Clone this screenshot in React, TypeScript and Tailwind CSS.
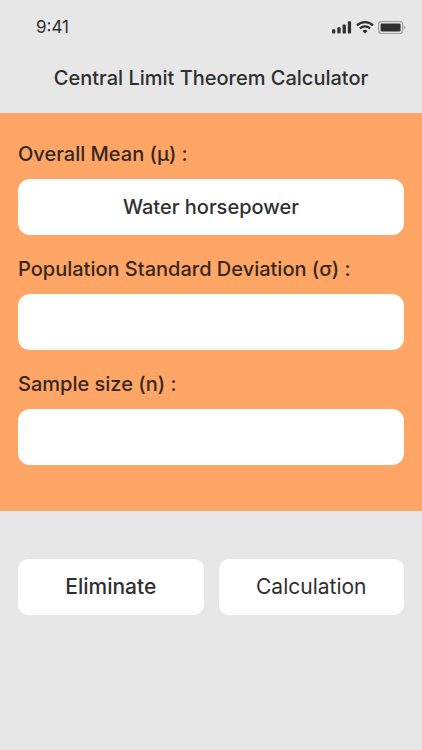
import { useState } from "react";

const fields = [
  { id: "mean", label: "Overall Mean (µ) :", value: "Water horsepower" },
  { id: "deviation", label: "Population Standard Deviation (σ) :", value: "" },
  { id: "size", label: "Sample size (n) :", value: "" },
];

function StatusBar() {
  return (
    <div className="flex items-center justify-between pt-4 pr-4 pl-9">
      <span className="text-[17px] leading-[22px]">9:41</span>
      <div className="flex items-center gap-1">
        {/* Signal */}
        <svg width="20" height="13" viewBox="0 0 20 13" fill="currentColor">
          <rect x="0" y="8.2" width="3.3" height="4.3" rx="1" />
          <rect x="5.3" y="6.2" width="3.3" height="6.3" rx="1" />
          <rect x="10.6" y="3.4" width="3.3" height="9.1" rx="1" />
          <rect x="15.8" y="0.3" width="3.3" height="12.2" rx="1" />
        </svg>
        {/* Wi-Fi */}
        <svg width="18" height="13" viewBox="0 0 18 13" fill="none" stroke="currentColor" strokeWidth="2.2">
          <path d="M1 4.4a11.5 11.5 0 0 1 16 0" />
          <path d="M3.9 7.5a7.2 7.2 0 0 1 10.2 0" />
          <path d="M9 12.4 6.5 9.9a3.8 3.8 0 0 1 5 0Z" fill="currentColor" stroke="none" />
        </svg>
        {/* Battery */}
        <svg width="28" height="13" viewBox="0 0 28 13">
          <rect x="0.6" y="0.5" width="24" height="12" rx="3" fill="none" stroke="currentColor" strokeWidth="1.1" opacity="0.4" />
          <rect x="2.6" y="2.4" width="20" height="8.2" rx="1.4" fill="currentColor" />
          <path d="M25.9 4.4v4.2a2.3 2.3 0 0 0 0-4.2Z" fill="currentColor" opacity="0.4" />
        </svg>
      </div>
    </div>
  );
}

export default function App() {
  const [values, setValues] = useState(fields.map((f) => f.value));

  const update = (i: number, next: string) => {
    setValues(values.map((v, j) => (j === i ? next : v)));
  };

  return (
    <main className="min-h-screen bg-[#e7e7e7] font-['Inter','Liberation_Sans',sans-serif] text-[#2f2f2f]">
      <header>
        <StatusBar />
        <h1 className="pt-[25px] pb-5 text-center text-[20px] leading-[30px] font-medium">
          Central Limit Theorem Calculator
        </h1>
      </header>

      <form onSubmit={(e) => e.preventDefault()}>
        <div className="flex flex-col gap-[19px] bg-[#ffa566] px-[18px] pt-[26px] pb-[46px]">
          {fields.map((field, i) => (
            <div key={field.id} className="flex flex-col gap-[10px]">
              <label htmlFor={field.id} className="text-[20px] leading-[30px] font-medium text-[#35281f]">
                {field.label}
              </label>
              <input
                id={field.id}
                value={values[i]}
                onChange={(e) => update(i, e.target.value)}
                className="h-14 w-full rounded-xl bg-white px-4 text-center text-[20px] font-medium outline-none"
              />
            </div>
          ))}
        </div>

        <div className="grid grid-cols-2 gap-[15px] px-[18px] pt-12">
          <button
            type="button"
            onClick={() => setValues(fields.map(() => ""))}
            className="h-14 rounded-[10px] bg-white text-[21px] font-medium"
          >
            Eliminate
          </button>
          <button type="submit" className="h-14 rounded-[10px] bg-white text-[21px]">
            Calculation
          </button>
        </div>
      </form>
    </main>
  );
}
